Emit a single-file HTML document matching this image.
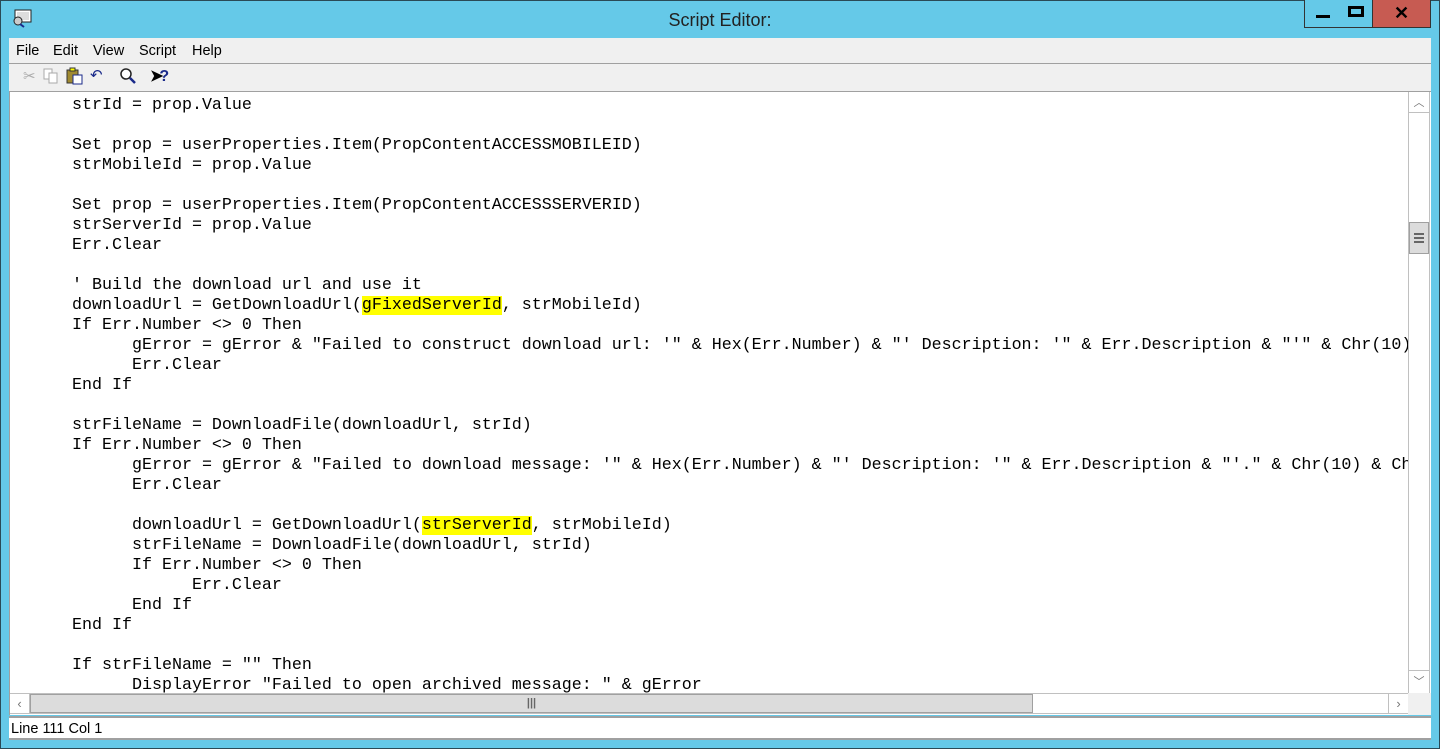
<!DOCTYPE html>
<html><head><style>
*{margin:0;padding:0;box-sizing:border-box}
body{width:1440px;height:749px;overflow:hidden;background:#65c9e8;position:relative;font-family:"Liberation Sans",sans-serif}
.frame{position:absolute;left:0;top:0;width:1440px;height:749px;border:1px solid #2a4a56;}
.title{position:absolute;left:0;top:0;width:1440px;height:38px;text-align:center;font-size:18px;line-height:40px;color:#222}
.btn{position:absolute;top:0;height:28px;border:1px solid #333;border-top:none}
.menu{position:absolute;left:9px;top:38px;width:1422px;height:26px;background:#f0f0f0;font-size:14.5px;line-height:26px;border-bottom:1px solid #a0a0a0}
.menu span{position:absolute;top:0}
.tool{position:absolute;left:9px;top:64px;width:1422px;height:28px;background:#f0f0f0;border-bottom:1px solid #a0a0a0}
.ed{position:absolute;left:9px;top:92px;width:1422px;height:623px;background:#fff;border-left:1px solid #a0a0a0;overflow:hidden}
.clip{position:absolute;left:0;top:0;width:1398px;height:601px;overflow:hidden}
pre{position:absolute;left:62px;top:4px;font-family:"Liberation Mono",monospace;font-size:16.67px;line-height:20px;color:#000;white-space:pre}
.h{background:#ffff00}
.vs{position:absolute;left:1398px;top:0;width:22px;height:601px;background:#fff;border-left:1px solid #c0c0c0;border-right:1px solid #c0c0c0}
.hs{position:absolute;left:0;top:601px;width:1398px;height:21px;background:#fff;border-top:1px solid #c0c0c0;border-bottom:1px solid #c0c0c0}
.status{position:absolute;left:9px;top:716px;width:1422px;height:24px;background:#fff;border-top:2px solid #a0a0a0;border-bottom:2px solid #a0a0a0;font-size:14.5px;line-height:22px;padding-left:2px}
</style></head><body>
<div class="frame"></div>
<svg style="position:absolute;left:11px;top:9px" width="22" height="20"><rect x="4" y="1" width="16" height="12" fill="#fff" stroke="#222"/><rect x="6" y="3" width="12" height="8" fill="#ddd"/><circle cx="7" cy="12" r="4" fill="#ccc" stroke="#222"/><line x1="9" y1="15" x2="13" y2="18" stroke="#1a2a8a" stroke-width="2"/></svg>
<div class="title">Script Editor:</div>
<div class="btn" style="left:1304px;width:36px;background:#65c9e8"><div style="position:absolute;left:11px;top:15px;width:14px;height:3px;background:#000"></div></div>
<div class="btn" style="left:1339px;width:34px;background:#65c9e8;border-left:none"><div style="position:absolute;left:9px;top:6px;width:16px;height:11px;border:3px solid #000"></div></div>
<div class="btn" style="left:1373px;width:58px;background:#c75b52;border-left:none;text-align:center;font-weight:bold;font-size:18px;line-height:26px">✕</div>
<div class="menu"><span style="left:7px">File</span><span style="left:44px">Edit</span><span style="left:84px">View</span><span style="left:130px">Script</span><span style="left:183px">Help</span></div>
<div class="tool">
<div style="position:absolute;left:14px;top:3px;font-size:15px;color:#aaa">✂</div>
<svg style="position:absolute;left:34px;top:4px" width="16" height="16"><rect x="1" y="1" width="8" height="10" fill="#fff" stroke="#aaa"/><rect x="6" y="5" width="8" height="10" fill="#fff" stroke="#aaa"/></svg>
<svg style="position:absolute;left:57px;top:3px" width="18" height="18"><rect x="1" y="3" width="11" height="13" fill="#a08a30" stroke="#333"/><rect x="4" y="1" width="5" height="3" fill="#ff0" stroke="#333"/><rect x="7" y="8" width="9" height="9" fill="#fff" stroke="#1a2a8a"/></svg>
<div style="position:absolute;left:81px;top:2px;font-size:15px;color:#1a2a8a">↶</div>
<svg style="position:absolute;left:110px;top:3px" width="18" height="18"><circle cx="7" cy="7" r="5" fill="#fff" stroke="#222" stroke-width="1.5"/><line x1="11" y1="11" x2="16" y2="16" stroke="#1a2a8a" stroke-width="2.5"/></svg>
<div style="position:absolute;left:141px;top:2px;font-size:16px;font-weight:bold;color:#000">➤<span style="color:#1a2a8a;margin-left:-4px">?</span></div>
</div>
<div class="ed">
<div class="clip">
<pre>strId = prop.Value

Set prop = userProperties.Item(PropContentACCESSMOBILEID)
strMobileId = prop.Value

Set prop = userProperties.Item(PropContentACCESSSERVERID)
strServerId = prop.Value
Err.Clear

' Build the download url and use it
downloadUrl = GetDownloadUrl(<span class="h">gFixedServerId</span>, strMobileId)
If Err.Number &lt;&gt; 0 Then
      gError = gError &amp; "Failed to construct download url: '" &amp; Hex(Err.Number) &amp; "' Description: '" &amp; Err.Description &amp; "'" &amp; Chr(10) &amp; Chr(13)
      Err.Clear
End If

strFileName = DownloadFile(downloadUrl, strId)
If Err.Number &lt;&gt; 0 Then
      gError = gError &amp; "Failed to download message: '" &amp; Hex(Err.Number) &amp; "' Description: '" &amp; Err.Description &amp; "'." &amp; Chr(10) &amp; Chr(13)
      Err.Clear

      downloadUrl = GetDownloadUrl(<span class="h">strServerId</span>, strMobileId)
      strFileName = DownloadFile(downloadUrl, strId)
      If Err.Number &lt;&gt; 0 Then
            Err.Clear
      End If
End If

If strFileName = "" Then
      DisplayError "Failed to open archived message: " &amp; gError</pre>
</div>
<div class="vs">
<div style="position:absolute;left:0;top:0;width:20px;height:21px;border-bottom:1px solid #c0c0c0;text-align:center;color:#777;font-size:11px;line-height:22px">︿</div>
<div style="position:absolute;left:0;top:130px;width:20px;height:32px;background:#dcdcdc;border:1px solid #a0a0a0"><div style="margin:10px 4px;height:2px;background:#666;box-shadow:0 4px 0 #666,0 8px 0 #666;width:10px"></div></div>
<div style="position:absolute;left:0;top:578px;width:20px;height:22px;border-top:1px solid #c0c0c0;text-align:center;color:#777;font-size:11px;line-height:22px">﹀</div>
</div>
<div class="hs">
<div style="position:absolute;left:0;top:0;width:20px;height:19px;border-right:1px solid #c0c0c0;text-align:center;color:#777;font-size:13px;line-height:19px">‹</div>
<div style="position:absolute;left:20px;top:0;width:1003px;height:19px;background:#dcdcdc;border:1px solid #a0a0a0;text-align:center;font-size:11px;line-height:17px;color:#666;font-weight:bold">|||</div>
<div style="position:absolute;left:1378px;top:0;width:20px;height:19px;border-left:1px solid #c0c0c0;text-align:center;color:#777;font-size:13px;line-height:19px">›</div>
</div>
<div style="position:absolute;left:1398px;top:601px;width:24px;height:22px;background:#f0f0f0"></div>
</div>
<div class="status">Line 111 Col 1</div>
</body></html>
